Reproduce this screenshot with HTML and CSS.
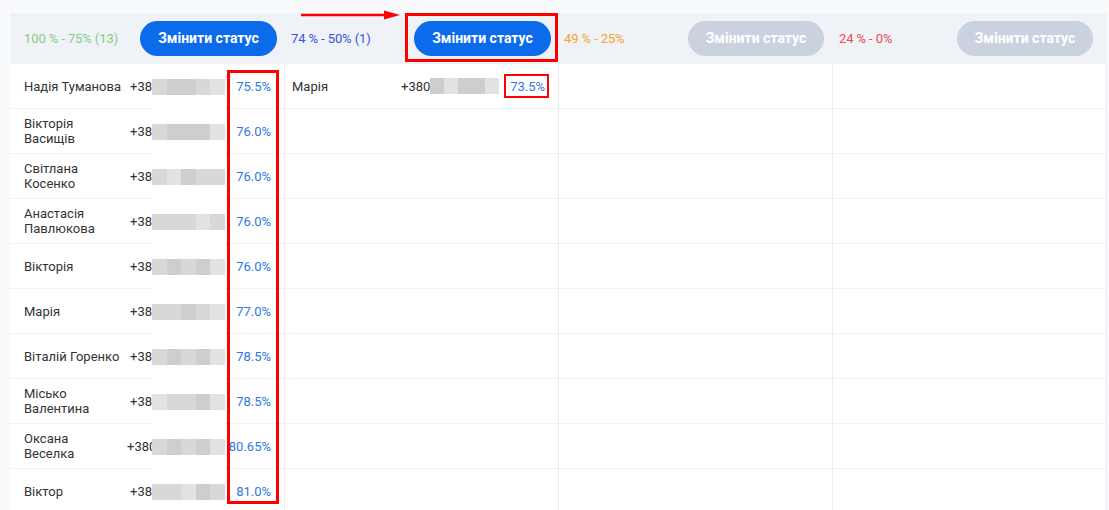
FILE: index.html
```html
<!DOCTYPE html>
<html>
	<head>
		<meta charset="utf-8">
		<link rel="stylesheet" href="styles.css">
	</head>
	<body>
		<div id="page">
			<div id="board">
				<div class="head">
					<div class="headCell first">
						<span class="label green">100 % - 75% (13)</span>
						<button class="status">Змінити статус</button>
					</div>
					<div class="headCell second">
						<span class="label blue">74 % - 50% (1)</span>
						<button class="status">Змінити статус</button>
					</div>
					<div class="headCell third">
						<span class="label orange">49 % - 25%</span>
						<button class="status off">Змінити статус</button>
					</div>
					<div class="headCell fourth">
						<span class="label red">24 % - 0%</span>
						<button class="status off">Змінити статус</button>
					</div>
				</div>

				<div class="body">
					<div class="column first">
						<div class="row">
							<div class="name">Надія Туманова</div>
							<div class="phone">+38</div>
							<div class="blur"><i class="s2"></i><i class="s3"></i><i class="s3"></i><i class="s2"></i><i class="s1"></i></div>
							<div class="percent">75.5%</div>
						</div>
						<div class="row">
							<div class="name">Вікторія Васищів</div>
							<div class="phone">+38</div>
							<div class="blur"><i class="s2"></i><i class="s3"></i><i class="s3"></i><i class="s3"></i><i class="s1"></i></div>
							<div class="percent">76.0%</div>
						</div>
						<div class="row">
							<div class="name">Світлана Косенко</div>
							<div class="phone">+38</div>
							<div class="blur"><i class="s2"></i><i class="s1"></i><i class="s3"></i><i class="s2"></i><i class="s2"></i></div>
							<div class="percent">76.0%</div>
						</div>
						<div class="row">
							<div class="name">Анастасія Павлюкова</div>
							<div class="phone">+38</div>
							<div class="blur"><i class="s2"></i><i class="s2"></i><i class="s2"></i><i class="s1"></i><i class="s2"></i></div>
							<div class="percent">76.0%</div>
						</div>
						<div class="row">
							<div class="name">Вікторія</div>
							<div class="phone">+38</div>
							<div class="blur"><i class="s2"></i><i class="s3"></i><i class="s2"></i><i class="s3"></i><i class="s1"></i></div>
							<div class="percent">76.0%</div>
						</div>
						<div class="row">
							<div class="name">Марія</div>
							<div class="phone">+38</div>
							<div class="blur"><i class="s2"></i><i class="s2"></i><i class="s3"></i><i class="s2"></i><i class="s1"></i></div>
							<div class="percent">77.0%</div>
						</div>
						<div class="row">
							<div class="name">Віталій Горенко</div>
							<div class="phone">+38</div>
							<div class="blur"><i class="s2"></i><i class="s3"></i><i class="s2"></i><i class="s3"></i><i class="s1"></i></div>
							<div class="percent">78.5%</div>
						</div>
						<div class="row">
							<div class="name">Місько Валентина</div>
							<div class="phone">+38</div>
							<div class="blur"><i class="s1"></i><i class="s2"></i><i class="s2"></i><i class="s3"></i><i class="s1"></i></div>
							<div class="percent">78.5%</div>
						</div>
						<div class="row">
							<div class="name narrow">Оксана Веселка</div>
							<div class="phone wide">+380</div>
							<div class="blur"><i class="s2"></i><i class="s3"></i><i class="s2"></i><i class="s3"></i><i class="s1"></i></div>
							<div class="percent">80.65%</div>
						</div>
						<div class="row">
							<div class="name">Віктор</div>
							<div class="phone">+38</div>
							<div class="blur"><i class="s2"></i><i class="s2"></i><i class="s1"></i><i class="s3"></i><i class="s2"></i></div>
							<div class="percent">81.0%</div>
						</div>
					</div>

					<div class="column second">
						<div class="row">
							<div class="name">Марія</div>
							<div class="phone">+380</div>
							<div class="blur small"><i class="s3"></i><i class="s1"></i><i class="s3"></i><i class="s3"></i><i class="s1"></i></div>
							<div class="percent">73.5%</div>
						</div>
						<div class="row"></div>
						<div class="row"></div>
						<div class="row"></div>
						<div class="row"></div>
						<div class="row"></div>
						<div class="row"></div>
						<div class="row"></div>
						<div class="row"></div>
						<div class="row"></div>
					</div>

					<div class="column">
						<div class="row"></div>
						<div class="row"></div>
						<div class="row"></div>
						<div class="row"></div>
						<div class="row"></div>
						<div class="row"></div>
						<div class="row"></div>
						<div class="row"></div>
						<div class="row"></div>
						<div class="row"></div>
					</div>

					<div class="column">
						<div class="row"></div>
						<div class="row"></div>
						<div class="row"></div>
						<div class="row"></div>
						<div class="row"></div>
						<div class="row"></div>
						<div class="row"></div>
						<div class="row"></div>
						<div class="row"></div>
						<div class="row"></div>
					</div>
				</div>
			</div>

			<!-- annotations drawn over the screenshot -->
			<div class="mark markList"></div>
			<div class="mark markButton"></div>
			<div class="mark markValue"></div>
			<svg class="arrow" width="104" height="12" viewBox="0 0 104 12">
				<line x1="1" y1="6" x2="88" y2="6" stroke="#f00" stroke-width="2.5"></line>
				<polygon points="84,1.5 100,6 84,10.5" fill="#f00"></polygon>
			</svg>
		</div>
	</body>
</html>
```

FILE: styles.css
```css
html, body{
	margin:0px;
	padding:0px;
	background-color:#f9fafb;
	overflow:hidden;
}
body{
	font-family: Roboto, "Noto Sans", sans-serif;
	font-size:13px;
	color:#333;
}
#page{
	position:relative;
	width:1109px;
	height:510px;
	padding:13px 0px 0px 10px;
	box-sizing:border-box;
}
#board{
	width:1097px;
}
.head{
	display:flex;
	height:50px;
	padding-bottom:1px;
	background-color:#eff2f6;
}
.headCell{
	width:274px;
	display:flex;
	align-items:center;
	box-sizing:border-box;
}
.headCell.first{
	width:275px;
	padding:0px 8px 0px 14px;
}
.headCell.second{
	padding:0px 8px 0px 6px;
}
.headCell.third{
	padding:0px 9px 0px 5px;
}
.headCell.fourth{
	padding:0px 14px 0px 6px;
}
.label{
	font-size:13px;
	letter-spacing:-0.1px;
}
.green{
	color:#86cd84;
}
.blue{
	color:#3a53d8;
}
.orange{
	color:#f3a52b;
}
.red{
	color:#ee4a57;
}
.status{
	margin-left:auto;
	width:137px;
	height:35px;
	border:none;
	border-radius:18px;
	background-color:#0c6bea;
	color:#fff;
	font-family: Roboto, sans-serif;
	font-weight:bold;
	font-size:14px;
	padding:0px;
}
.status.off{
	background-color:#cbd2df;
	width:136px;
}
.body{
	display:flex;
	background-color:#fff;
}
.column{
	width:274px;
	border-right:solid 1px #e9edf3;
	box-sizing:border-box;
}
.column.first{
	width:275px;
}
.row{
	height:45px;
	border-bottom:solid 1px #eef1f5;
	box-sizing:border-box;
	display:flex;
	align-items:center;
	padding:0px 13px 0px 7px;
}
.column.first .row{
	padding-left:14px;
}
.name{
	width:109px;
	line-height:15px;
	box-sizing:border-box;
}
.column.first .name{
	width:100px;
}
.column.first .name.narrow{
	padding-right:10px;
}
.phone{
	width:29px;
	white-space:nowrap;
	overflow:hidden;
	box-sizing:border-box;
}
.column.first .phone{
	width:28px;
	text-align:right;
}
.column.first .phone.wide{
	padding-left:3px;
	text-align:left;
}
.blur{
	width:73px;
	align-self:stretch;
	margin-bottom:-1px;
	background-color:#fff;
	display:flex;
	align-items:center;
}
.blur i{
	flex:1;
	height:16px;
}
.blur.small{
	width:69px;
	align-self:center;
	margin-bottom:0px;
}
.s1{
	background-color:#e2e2e2;
}
.s2{
	background-color:#d8d8d8;
}
.s3{
	background-color:#cecece;
}
.percent{
	width:46px;
	text-align:right;
	color:#2f78e4;
	white-space:nowrap;
}
.mark{
	position:absolute;
	border:solid 3px #f00;
	box-sizing:border-box;
}
.markList{
	left:227px;
	top:70px;
	width:52px;
	height:434px;
}
.markButton{
	left:405px;
	top:13px;
	width:153px;
	height:49px;
}
.markValue{
	left:504px;
	top:74px;
	width:45px;
	height:24px;
	border-width:2.5px;
}
.arrow{
	position:absolute;
	left:300px;
	top:9px;
}
```
